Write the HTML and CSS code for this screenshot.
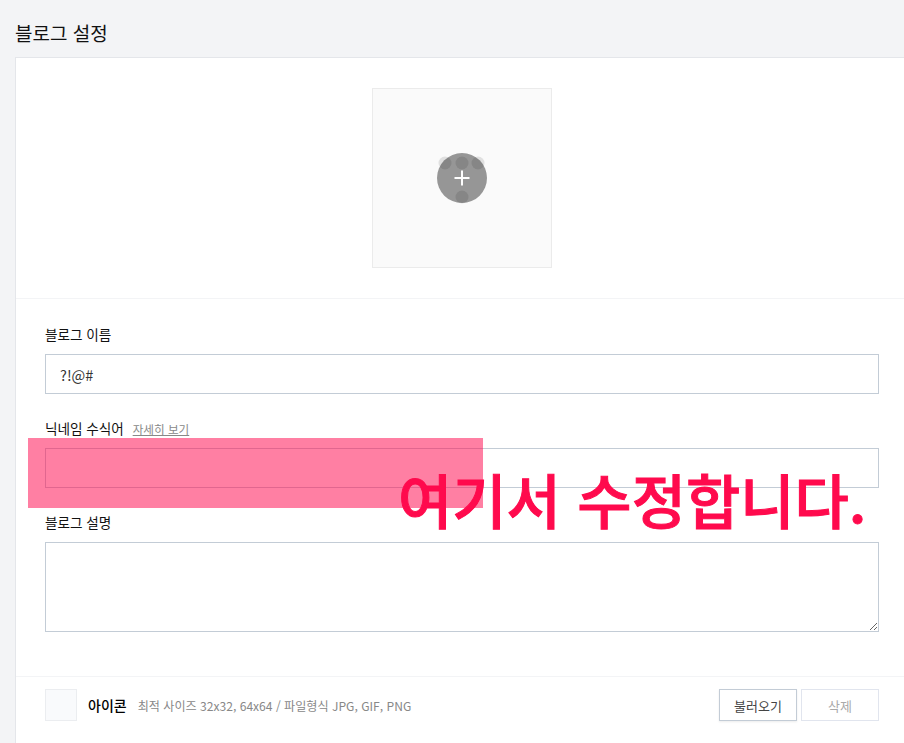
FILE: index.html
```html
<!DOCTYPE html>
<html lang="ko">
<head>
    <meta charset="UTF-8">
    <title>블로그 설정</title>
    <link rel="stylesheet" href="styles.css">
</head>
<body>

<h2 class="page-title">블로그 설정</h2>

<div class="card">

    <!-- 대표 이미지 -->
    <div class="cover-section">
        <div class="cover-box">
            <svg class="cover-icon" width="60" height="60" viewBox="0 0 60 60">
                <circle cx="13" cy="15" r="6.5" fill="#e0e0e0"/>
                <circle cx="30" cy="15" r="6.5" fill="#e0e0e0"/>
                <circle cx="46" cy="15" r="6.5" fill="#e0e0e0"/>
                <circle cx="30" cy="49" r="6.5" fill="#e0e0e0"/>
                <circle cx="30" cy="30" r="25" fill="#000" fill-opacity="0.4"/>
                <path d="M30 22.5v15M22.5 30h15" stroke="#fff" stroke-width="2" fill="none"/>
            </svg>
        </div>
    </div>

    <!-- 입력 폼 -->
    <div class="form-section">
        <div class="field">
            <label class="field-label">블로그 이름</label>
            <input class="text-input" type="text" value="?!@#">
        </div>
        <div class="field">
            <label class="field-label">닉네임 수식어 <a class="more-link" href="#">자세히 보기</a></label>
            <input class="text-input" type="text">
        </div>
        <div class="field">
            <label class="field-label">블로그 설명</label>
            <textarea class="text-area"></textarea>
        </div>
    </div>

    <!-- 아이콘 -->
    <div class="icon-section">
        <div class="icon-thumb"></div>
        <strong class="icon-title">아이콘</strong>
        <span class="icon-desc">최적 사이즈 32x32, 64x64 / 파일형식 JPG, GIF, PNG</span>
        <div class="icon-buttons">
            <button class="btn btn-load">불러오기</button>
            <button class="btn btn-delete">삭제</button>
        </div>
    </div>

</div>

<!-- 강조 표시 -->
<div class="highlight"></div>
<div class="callout">여기서 수정합니다.</div>

</body>
</html>
```

FILE: styles.css
```css
html, body {
    height: 743px;
    overflow: hidden;
}
body {
    position: relative;
    margin: 0;
    padding: 0 0 0 15px;
    background-color: #f3f4f6;
    font-family: "Noto Sans CJK KR", "Noto Sans", sans-serif;
    color: #000;
}
.page-title {
    margin: 0;
    height: 57px;
    font-size: 19px;
    font-weight: 400;
    line-height: 65px;
    color: #111;
}
.card {
    width: 894px;
    height: 720px;
    box-sizing: border-box;
    background: #fff;
    border: 1px solid #e4e6ea;
}
.cover-section {
    display: flex;
    justify-content: center;
    padding: 30px 0;
    border-bottom: 1px solid #f3f4f6;
}
.cover-box {
    display: flex;
    justify-content: center;
    align-items: center;
    box-sizing: border-box;
    width: 180px;
    height: 180px;
    background: #fafafa;
    border: 1px solid #ebebeb;
}
.form-section {
    padding: 25px 29px 0;
    box-sizing: border-box;
    height: 378px;
    border-bottom: 1px solid #f3f4f6;
}
.field {
    margin-bottom: 24px;
}
.field-label {
    display: block;
    height: 30px;
    font-size: 13.6px;
    line-height: 21px;
    color: #111;
}
.more-link {
    margin-left: 5px;
    font-size: 11.6px;
    color: #888;
}
.text-input,
.text-area {
    display: block;
    box-sizing: border-box;
    width: 834px;
    padding: 0 14px;
    border: 1px solid #c3ccd6;
    border-radius: 0;
    outline: none;
    font-family: inherit;
    font-size: 14.5px;
    color: #333;
}
.text-input {
    height: 40px;
}
.text-area {
    height: 90px;
}
.icon-section {
    display: flex;
    align-items: center;
    padding: 12px 29px;
}
.icon-thumb {
    box-sizing: border-box;
    width: 32px;
    height: 32px;
    background: #f9fafc;
    border: 1px solid #ebedf0;
}
.icon-title {
    margin-left: 11px;
    font-size: 14px;
    font-weight: 500;
}
.icon-desc {
    margin-left: 11px;
    font-size: 12.1px;
    color: #888;
}
.icon-buttons {
    display: flex;
    gap: 4px;
    margin-left: auto;
}
.btn {
    box-sizing: border-box;
    width: 78px;
    height: 32px;
    padding: 0;
    background: #fff;
    font-family: inherit;
    font-size: 13px;
}
.btn-load {
    border: 1px solid #c3ccd6;
    color: #444;
    box-shadow: 0 1px 2px rgba(0, 0, 0, 0.08);
}
.btn-delete {
    border: 1px solid #e1e5ee;
    color: #aaa;
}
.highlight {
    position: absolute;
    left: 28px;
    top: 438px;
    width: 455px;
    height: 70px;
    background: rgba(255, 0, 72, 0.5);
}
.callout {
    position: absolute;
    left: 398px;
    top: 459px;
    font-size: 59px;
    font-weight: 500;
    line-height: 80px;
    white-space: nowrap;
    color: #ff0a4d;
    -webkit-text-stroke: 1px #ff0a4d;
}
```
